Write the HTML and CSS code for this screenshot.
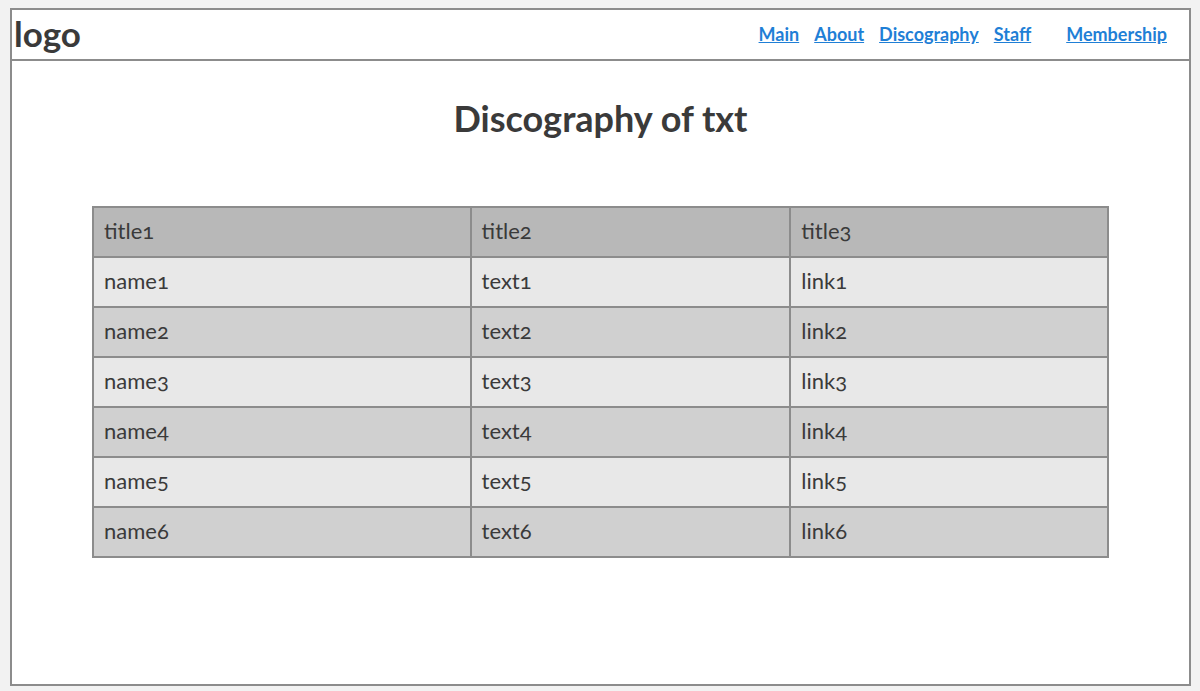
FILE: index.html
```html
<!DOCTYPE html>
<html lang="en">
<head>
<meta charset="utf-8">
<title>Discography of txt</title>
<link rel="stylesheet" href="styles.css">
</head>
<body>
<div class="page">
  <header class="header">
    <div class="logo">logo</div>
    <nav class="nav">
      <a href="#">Main</a>
      <a href="#">About</a>
      <a href="#">Discography</a>
      <a href="#">Staff</a>
      <a href="#" class="member">Membership</a>
    </nav>
  </header>
  <main class="content">
    <h1 class="title">Discography of txt</h1>
    <table class="disco">
      <colgroup>
        <col class="c1">
        <col class="c2">
        <col class="c3">
      </colgroup>
      <thead>
        <tr><th>title1</th><th>title2</th><th>title3</th></tr>
      </thead>
      <tbody>
        <tr><td>name1</td><td>text1</td><td>link1</td></tr>
        <tr><td>name2</td><td>text2</td><td>link2</td></tr>
        <tr><td>name3</td><td>text3</td><td>link3</td></tr>
        <tr><td>name4</td><td>text4</td><td>link4</td></tr>
        <tr><td>name5</td><td>text5</td><td>link5</td></tr>
        <tr><td>name6</td><td>text6</td><td>link6</td></tr>
      </tbody>
    </table>
  </main>
</div>
</body>
</html>
```
FILE: styles.css
```css
html, body {
  margin: 0;
  padding: 0;
}
body {
  background: #f2f2f2;
  padding: 8px 9px 5px 10px;
  font-family: "Lato", "Noto Sans", sans-serif;
  color: #3a3a3a;
  font-variant-numeric: oldstyle-nums;
}
.page {
  box-sizing: border-box;
  height: 678px;
  background: #fff;
  border: 2px solid #8c8c8c;
  display: flex;
  flex-direction: column;
}
.header {
  height: 49px;
  border-bottom: 2px solid #8c8c8c;
  display: flex;
  align-items: center;
  justify-content: space-between;
  padding: 0 22px 0 2px;
}
.logo {
  font-size: 35px;
  font-weight: 700;
  color: #3a3a3a;
  margin-top: -3px;
}
.nav {
  display: flex;
  gap: 15px;
  font-size: 18px;
  font-weight: 700;
  margin-top: -2px;
}
.nav a {
  color: #1f7fd6;
  text-decoration: underline;
}
.nav .member {
  margin-left: 20px;
}
.content {
  padding: 0 80px;
}
.title {
  text-align: center;
  font-size: 36px;
  font-weight: 700;
  margin: 35px 0 66px;
  line-height: 44px;
}
.disco {
  width: 100%;
  table-layout: fixed;
  border-collapse: collapse;
  border: 2px solid #8c8c8c;
  font-size: 22px;
}
.disco th, .disco td {
  border: 2px solid #8c8c8c;
  text-align: left;
  font-weight: 400;
  padding: 0 10px 4px;
  height: 44px;
}
.disco th {
  background: #b8b8b8;
}
.disco tbody tr:nth-child(odd) td {
  background: #e8e8e8;
}
.disco tbody tr:nth-child(even) td {
  background: #d0d0d0;
}
.c1 { width: 37.2%; }
.c2 { width: 31.5%; }
.c3 { width: 31.3%; }
```
